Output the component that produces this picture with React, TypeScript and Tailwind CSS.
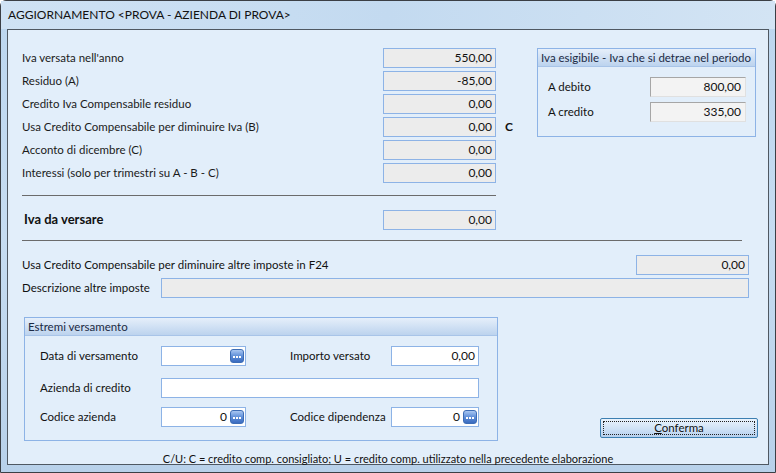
import React from 'react';

const font = { fontFamily: 'Lato, "Noto Sans", sans-serif' };

const ReadBox = ({ value, w = 'w-[113px]' }: { value: string; w?: string }) => (
  <div className={`${w} h-[20px] border border-[#8db3e6] bg-[#ececec] flex items-center justify-end pr-[3px] text-[12px] text-[#111]`}>
    {value}
  </div>
);

const EditBox = ({ value, w, browse }: { value?: string; w: string; browse?: boolean }) => (
  <div className={`${w} h-[20px] border border-[#8db3e6] bg-white flex items-center justify-end pr-[1px] text-[12px] text-[#111]`}>
    {value && <span className={browse ? 'mr-[3px]' : 'mr-[2px]'}>{value}</span>}
    {browse && <BrowseBtn />}
  </div>
);

const BrowseBtn = () => (
  <div className="w-[14px] h-[14px] rounded-[3px] border border-[#3d6db5] bg-gradient-to-b from-[#a9c7f2] via-[#5f8fd8] to-[#3b6cc0] flex items-center justify-center gap-[1px] pt-[2px]">
    <span className="w-[2px] h-[2px] bg-white" />
    <span className="w-[2px] h-[2px] bg-white" />
    <span className="w-[2px] h-[2px] bg-white" />
  </div>
);

const Row = ({ label, value, extra }: { label: string; value: string; extra?: React.ReactNode }) => (
  <div className="flex items-center h-[20px] mb-[3px]">
    <span className="w-[361px] whitespace-nowrap text-[11.5px] text-[#1b1b1b]">{label}</span>
    <ReadBox value={value} />
    {extra}
  </div>
);

const GroupHeader = ({ title }: { title: string }) => (
  <div className="h-[18px] whitespace-nowrap bg-gradient-to-b from-[#e6effa] to-[#bcd3ee] border-b border-[#a8c4e8] flex items-center pl-[3px] text-[11.5px] text-[#1b2a44]">
    {title}
  </div>
);

const Label = ({ w, children, className = '' }: { w: string; children: React.ReactNode; className?: string }) => (
  <span className={`${w} ${className} whitespace-nowrap text-[11.5px] text-[#111]`}>{children}</span>
);

export default function App() {
  return (
    <div style={font} className="w-[776px] h-[473px] overflow-hidden bg-white">
      <div className="w-[776px] h-[473px] rounded-t-[6px] border border-[#3b3f45] bg-gradient-to-b from-[#bcd6ef] via-[#c6dcf1] to-[#b8d1ea] flex flex-col">
        {/* title bar */}
        <div className="h-[28px] flex items-center pl-[7px] text-[12px] text-[#111] bg-gradient-to-r from-[#cfe2f4] via-[#c3daf0] to-[#d3e4f4]">
          AGGIORNAMENTO &lt;PROVA - AZIENDA DI PROVA&gt;
        </div>

        {/* client area */}
        <div className="mx-[6px] h-[436px] border border-[#4f5862] bg-[#e2eefa] flex flex-col">
          <div className="flex pt-[18px]">
            {/* left column */}
            <div className="w-[529px] pl-[14px]">
              <Row label="Iva versata nell'anno" value="550,00" />
              <Row label="Residuo (A)" value="-85,00" />
              <Row label="Credito Iva Compensabile residuo" value="0,00" />
              <Row
                label="Usa Credito Compensabile per diminuire Iva (B)"
                value="0,00"
                extra={<span className="ml-[9px] text-[12px] font-bold text-[#111]">C</span>}
              />
              <Row label="Acconto di dicembre (C)" value="0,00" />
              <Row label="Interessi (solo per trimestri su A - B - C)" value="0,00" />
              <div className="w-[474px] mt-[12px] border-t border-[#6b6b6b]" />
              <div className="flex items-center h-[20px] mt-[14px]">
                <span className="w-[361px] text-[13px] font-bold text-[#111] pl-[2px]">Iva da versare</span>
                <ReadBox value="0,00" />
              </div>
            </div>

            {/* right group */}
            <div className="w-[219px] h-[89px] border border-[#8db3e6] bg-[#e2eefa]">
              <GroupHeader title="Iva esigibile - Iva che si detrae nel periodo" />
              <div className="flex items-center h-[20px] mt-[10px] pl-[10px]">
                <Label w="w-[102px]">A debito</Label>
                <div className="w-[96px] h-[20px] border border-[#a6a6a6] border-b-[#e0e0e0] border-r-[#e0e0e0] bg-[#f3f3f3] flex items-center justify-end pr-[4px] text-[12px] text-[#111]">800,00</div>
              </div>
              <div className="flex items-center h-[20px] mt-[5px] pl-[10px]">
                <Label w="w-[102px]">A credito</Label>
                <div className="w-[96px] h-[20px] border border-[#a6a6a6] border-b-[#e0e0e0] border-r-[#e0e0e0] bg-[#f3f3f3] flex items-center justify-end pr-[4px] text-[12px] text-[#111]">335,00</div>
              </div>
            </div>
          </div>

          <div className="ml-[14px] w-[720px] mt-[10px] border-t border-[#6b6b6b]" />

          <div className="flex items-center h-[20px] mt-[14px] pl-[14px] pr-[19px]">
            <Label w="flex-1">Usa Credito Compensabile per diminuire altre imposte in F24</Label>
            <ReadBox value="0,00" />
          </div>
          <div className="flex items-center h-[20px] mt-[3px] pl-[14px] pr-[19px]">
            <Label w="w-[139px]">Descrizione altre imposte</Label>
            <ReadBox value="" w="flex-1" />
          </div>

          {/* bottom: group + button */}
          <div className="flex items-end mt-[19px]">
            <div className="ml-[16px] w-[474px] h-[124px] border border-[#8db3e6] bg-[#e2eefa]">
              <GroupHeader title="Estremi versamento" />
              <div className="flex items-center h-[20px] mt-[10px] pl-[15px]">
                <Label w="w-[121px]">Data di versamento</Label>
                <EditBox w="w-[85px]" browse />
                <Label w="w-[101px]" className="ml-[44px]">Importo versato</Label>
                <EditBox w="w-[88px]" value="0,00" />
              </div>
              <div className="flex items-center h-[20px] mt-[12px] pl-[15px]">
                <Label w="w-[121px]">Azienda di credito</Label>
                <EditBox w="w-[318px]" />
              </div>
              <div className="flex items-center h-[20px] mt-[9px] pl-[15px]">
                <Label w="w-[121px]">Codice azienda</Label>
                <EditBox w="w-[85px]" value="0" browse />
                <Label w="w-[101px]" className="ml-[44px]">Codice dipendenza</Label>
                <EditBox w="w-[88px]" value="0" browse />
              </div>
            </div>
            <div className="ml-[102px] mb-[3px] w-[158px] h-[20px] rounded-[2px] border border-[#3c7fb1] bg-gradient-to-b from-[#eaf3fc] via-[#d2e4f7] to-[#b6d0ee] p-[2px]">
              <div className="w-full h-full border border-dotted border-[#222] flex items-center justify-center text-[11.5px] text-[#111] leading-none">
                <span><span className="underline">C</span>onferma</span>
              </div>
            </div>
          </div>

          <div className="mt-[10px] text-center text-[11px] text-[#111]">
            C/U: C = credito comp. consigliato; U = credito comp. utilizzato nella precedente elaborazione
          </div>
        </div>
      </div>
    </div>
  );
}
